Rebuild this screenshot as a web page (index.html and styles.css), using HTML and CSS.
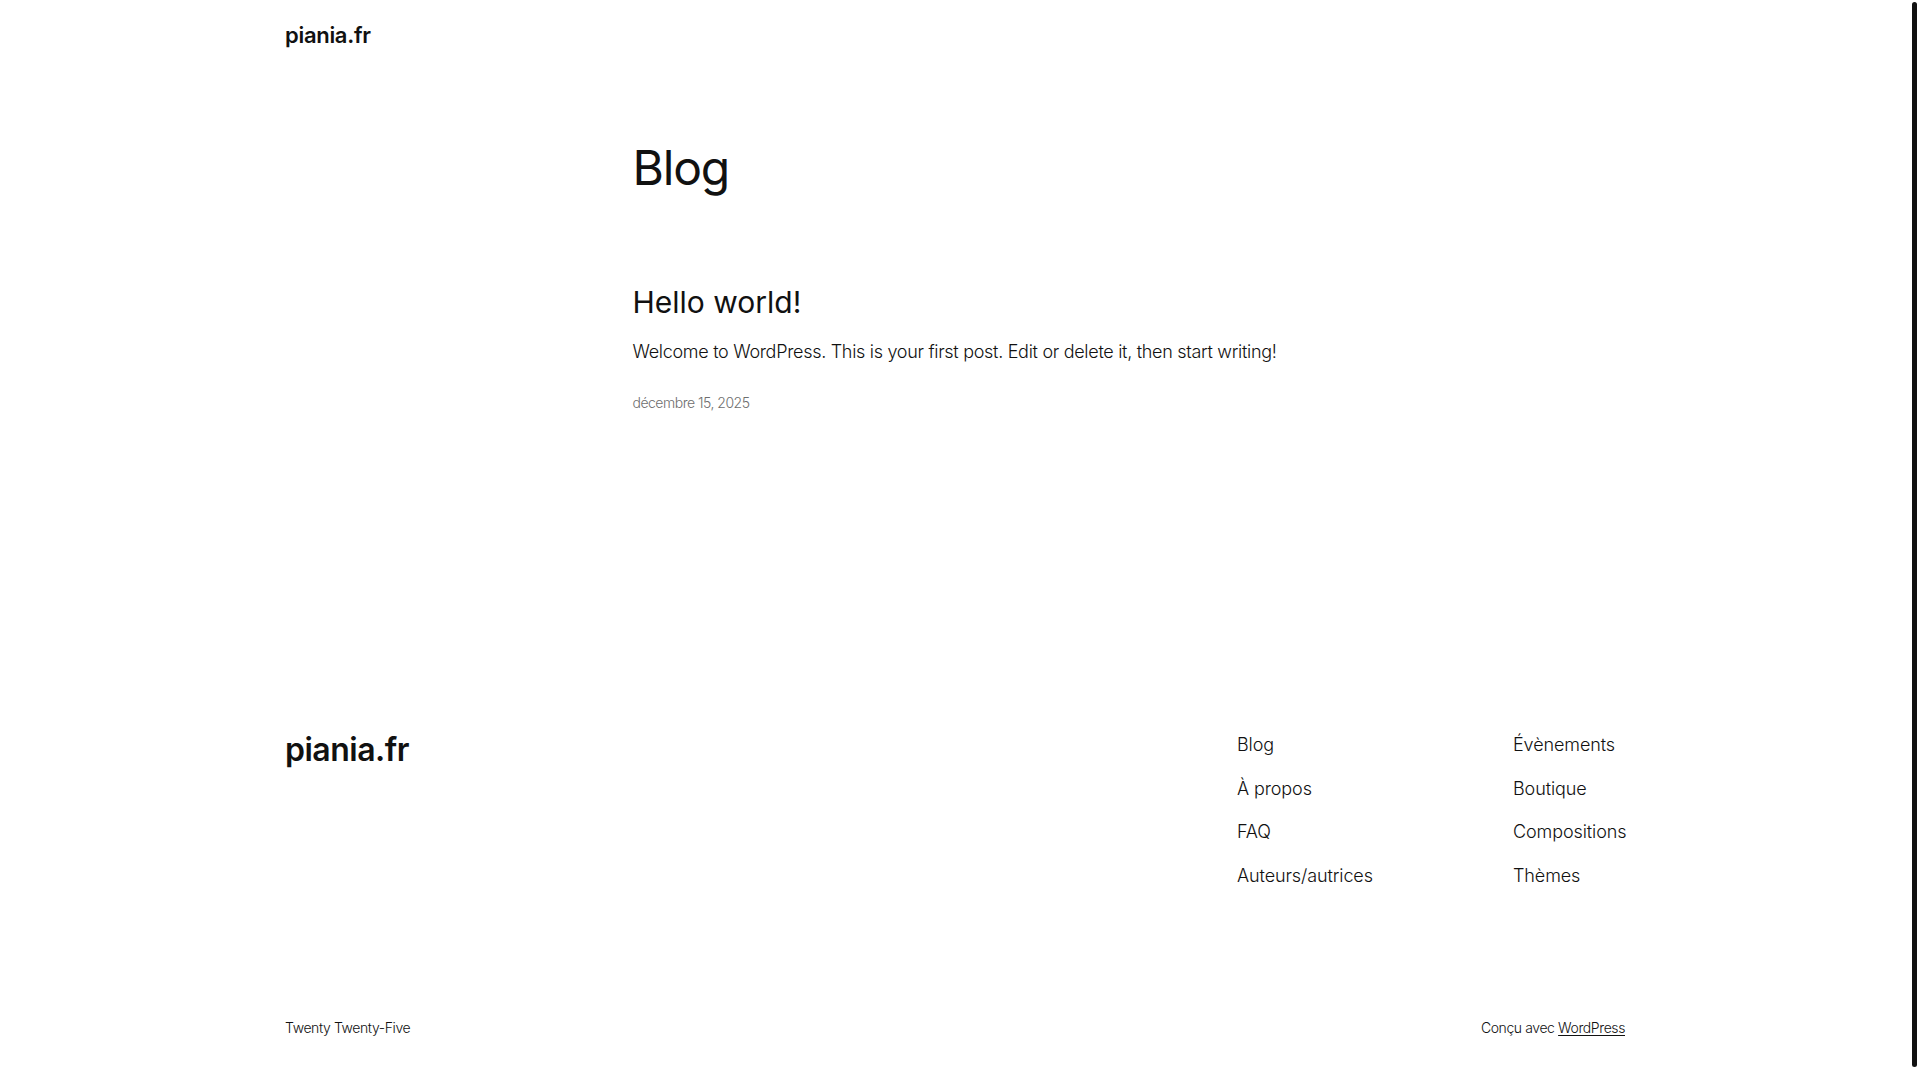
FILE: index.html
```html
<!DOCTYPE html>
<html lang="fr">
<head>
    <meta charset="UTF-8">
    <meta name="viewport" content="width=device-width, initial-scale=1.0">
    <title>Blog - piania.fr</title>
    <link rel="stylesheet" href="styles.css">
</head>
<body>
    <div class="site">
        <!-- Header -->
        <header class="site-header">
            <a class="site-title" href="#">piania.fr</a>
        </header>

        <!-- Main -->
        <main class="site-main">
            <h1 class="page-title">Blog</h1>

            <ul class="post-list">
                <li class="post">
                    <h2 class="post-title"><a href="#">Hello world!</a></h2>
                    <p class="post-excerpt">Welcome to WordPress. This is your first post. Edit or delete it, then start writing!</p>
                    <time class="post-date" datetime="2025-12-15">décembre 15, 2025</time>
                </li>
            </ul>
        </main>

        <!-- Footer -->
        <footer class="site-footer">
            <div class="footer-top">
                <a class="footer-title" href="#">piania.fr</a>
                <nav class="footer-nav">
                    <ul class="footer-col footer-col-first">
                        <li><a href="#">Blog</a></li>
                        <li><a href="#">À propos</a></li>
                        <li><a href="#">FAQ</a></li>
                        <li><a href="#">Auteurs/autrices</a></li>
                    </ul>
                    <ul class="footer-col">
                        <li><a href="#">Évènements</a></li>
                        <li><a href="#">Boutique</a></li>
                        <li><a href="#">Compositions</a></li>
                        <li><a href="#">Thèmes</a></li>
                    </ul>
                </nav>
            </div>
            <div class="footer-bottom">
                <p>Twenty Twenty-Five</p>
                <p>Conçu avec <a class="credit-link" href="#">WordPress</a></p>
            </div>
        </footer>
    </div>
    <div class="scroll-thumb"></div>
</body>
</html>
```

FILE: styles.css
```css
/* General Styles */
html {
    overflow: hidden;
}

body {
    margin: 0;
    padding: 0;
    background: #fff;
    color: #111;
    font-family: "Inter", "Liberation Sans", sans-serif;
    font-weight: 300;
    font-size: 18px;
    line-height: 1.4;
    letter-spacing: -0.1px;
}

a {
    color: inherit;
    text-decoration: none;
}

ul {
    list-style: none;
    margin: 0;
    padding: 0;
}

p {
    margin: 0;
}

/* leave room for the scrollbar gutter */
.site {
    margin-right: 10px;
}

/* Header */
.site-header {
    width: 1340px;
    margin: 0 auto;
    padding: 20px 0;
}

.site-title {
    display: block;
    font-size: 22px;
    font-weight: 600;
    line-height: 30.8px;
    letter-spacing: -0.3px;
}

/* Main */
.site-main {
    width: 645px;
    margin: 70px auto 0;
}

.page-title {
    margin: 0;
    font-size: 48px;
    font-weight: 400;
    line-height: 54px;
    letter-spacing: -1.2px;
}

.post-list {
    margin-top: 90px;
}

.post-title {
    margin: 0;
    font-size: 30px;
    font-weight: 400;
    line-height: 34px;
    letter-spacing: 0;
}

.post-excerpt {
    margin-top: 20px;
    letter-spacing: -0.3px;
}

.post-date {
    display: block;
    margin-top: 28px;
    font-size: 14px;
    line-height: 21px;
    color: #6e6e6e;
    letter-spacing: -0.5px;
}

/* Footer */
.site-footer {
    width: 1340px;
    margin: 313px auto 0;
}

.footer-top {
    display: flex;
    justify-content: space-between;
    align-items: flex-start;
}

.footer-title {
    margin-top: 5px;
    font-size: 32px;
    font-weight: 600;
    line-height: 38px;
    letter-spacing: -0.5px;
}

.footer-nav {
    display: flex;
    margin-top: 6px;
}

.footer-col {
    display: flex;
    flex-direction: column;
    gap: 18.5px;
    width: 112px;
}

.footer-col-first {
    width: 276px;
}

.footer-col li {
    line-height: 25.2px;
    white-space: nowrap;
    letter-spacing: -0.1px;
}

.footer-bottom {
    display: flex;
    justify-content: space-between;
    margin-top: 129px;
    font-size: 14px;
    line-height: 21px;
    letter-spacing: -0.4px;
}

.credit-link {
    text-decoration: underline;
    text-decoration-thickness: 1px;
    text-underline-offset: 0.15em;
}

/* Overlay scrollbar thumb */
.scroll-thumb {
    position: fixed;
    top: 2px;
    right: 3px;
    width: 5px;
    height: 1065px;
    background: #111;
    border-radius: 3px;
}
```
